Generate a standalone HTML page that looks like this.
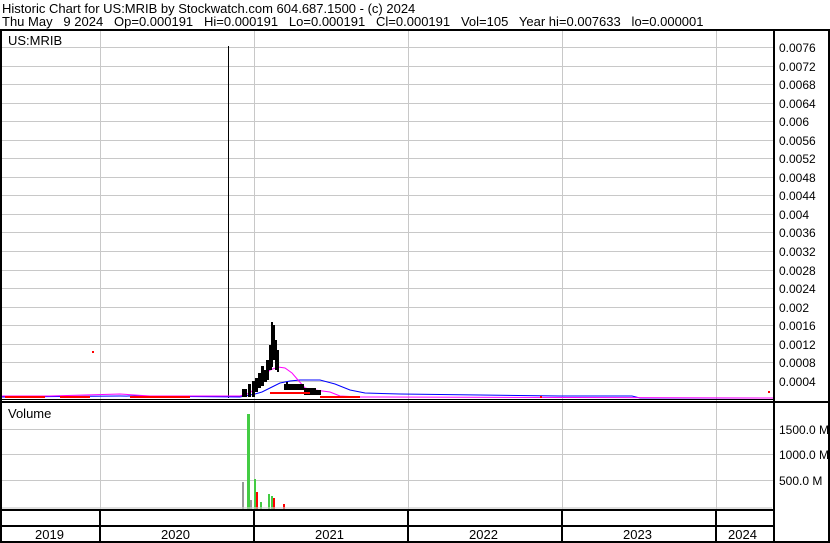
<!DOCTYPE html>
<html><head><style>
html,body{margin:0;padding:0;background:#fff;}
svg{display:block;font-family:"Liberation Sans",Arial,sans-serif;}
</style></head><body>
<svg width="830" height="543" viewBox="0 0 830 543" xmlns="http://www.w3.org/2000/svg">
<rect x="0" y="0" width="830" height="543" fill="#fff"/>
<text x="2" y="13" font-size="13" fill="#000">Historic Chart for US:MRIB by Stockwatch.com 604.687.1500 - (c) 2024</text>
<text x="2" y="26" font-size="13" fill="#000" xml:space="preserve">Thu May   9 2024   Op=0.000191   Hi=0.000191   Lo=0.000191   Cl=0.000191   Vol=105   Year hi=0.007633   lo=0.000001</text>
<g stroke="#c8c8c8" stroke-width="1">
<line x1="2" y1="47.5" x2="773" y2="47.5"/><line x1="2" y1="66.5" x2="773" y2="66.5"/><line x1="2" y1="84.5" x2="773" y2="84.5"/><line x1="2" y1="103.5" x2="773" y2="103.5"/><line x1="2" y1="121.5" x2="773" y2="121.5"/><line x1="2" y1="140.5" x2="773" y2="140.5"/><line x1="2" y1="158.5" x2="773" y2="158.5"/><line x1="2" y1="177.5" x2="773" y2="177.5"/><line x1="2" y1="195.5" x2="773" y2="195.5"/><line x1="2" y1="214.5" x2="773" y2="214.5"/><line x1="2" y1="232.5" x2="773" y2="232.5"/><line x1="2" y1="251.5" x2="773" y2="251.5"/><line x1="2" y1="270.5" x2="773" y2="270.5"/><line x1="2" y1="288.5" x2="773" y2="288.5"/><line x1="2" y1="307.5" x2="773" y2="307.5"/><line x1="2" y1="325.5" x2="773" y2="325.5"/><line x1="2" y1="344.5" x2="773" y2="344.5"/><line x1="2" y1="362.5" x2="773" y2="362.5"/><line x1="2" y1="381.5" x2="773" y2="381.5"/>
<line x1="2" y1="429.5" x2="773" y2="429.5"/><line x1="2" y1="454.5" x2="773" y2="454.5"/><line x1="2" y1="480.5" x2="773" y2="480.5"/>
<line x1="100.5" y1="31" x2="100.5" y2="509"/><line x1="254.5" y1="31" x2="254.5" y2="509"/><line x1="408.5" y1="31" x2="408.5" y2="509"/><line x1="562.5" y1="31" x2="562.5" y2="509"/><line x1="716.5" y1="31" x2="716.5" y2="509"/>
</g>
<text x="8" y="45" font-size="13">US:MRIB</text>
<text x="8" y="418" font-size="13">Volume</text>
<!-- spike -->
<line x1="228.5" y1="46" x2="228.5" y2="398" stroke="#000"/>
<!-- MA lines -->
<polyline fill="none" stroke="#00f" points="2,397 120,396 240,397 255,394 262,392 272,387 280,383 290,381 300,380 320,380 335,384 350,390 365,393 400,394 480,395 560,396 632,396 640,398 773,398"/>
<polyline fill="none" stroke="#f0f" points="2,396 50,396 120,394 150,396 240,396 250,393 258,385 262,378 270,370 278,367 285,368 292,373 298,380 305,388 315,390 330,392 340,396 360,397 773,398"/>
<!-- candles -->
<g fill="#000">
<rect x="242" y="389" width="5" height="8"/><rect x="248" y="384" width="3" height="13"/><rect x="252" y="381" width="3" height="16"/><rect x="255" y="378" width="3" height="14"/><rect x="258" y="373" width="3" height="15"/><rect x="261" y="366" width="3" height="20"/><rect x="264" y="370" width="3" height="12"/><rect x="266" y="360" width="3" height="20"/><rect x="269" y="345" width="3" height="25"/><rect x="271" y="322" width="2" height="45"/><rect x="273" y="325" width="2" height="35"/><rect x="275" y="340" width="2" height="30"/><rect x="277" y="350" width="2" height="22"/><rect x="284" y="384" width="20" height="6"/><rect x="286" y="382" width="2" height="8"/><rect x="304" y="388" width="12" height="7"/><rect x="316" y="390" width="5" height="5"/>
</g>
<g fill="#f00">
<rect x="5" y="396" width="40" height="2"/><rect x="60" y="396" width="30" height="2"/><rect x="130" y="396" width="60" height="2"/><rect x="270" y="392" width="40" height="2"/><rect x="320" y="396" width="40" height="2"/><rect x="92" y="351" width="2" height="2"/><rect x="768" y="391" width="2" height="2"/><rect x="540" y="396" width="2" height="2"/>
</g>
<!-- volume bars -->
<g>
<rect x="242" y="482" width="2" height="27" fill="#999"/>
<rect x="247" y="414" width="3" height="95" fill="#4c4"/>
<rect x="250" y="500" width="2" height="9" fill="#999"/>
<rect x="254" y="479" width="2" height="30" fill="#4c4"/>
<rect x="256" y="492" width="2" height="17" fill="#f00"/>
<rect x="260" y="502" width="2" height="7" fill="#4c4"/>
<rect x="268" y="494" width="2" height="15" fill="#4c4"/>
<rect x="271" y="496" width="2" height="13" fill="#4c4"/>
<rect x="273" y="498" width="2" height="11" fill="#f00"/>
<rect x="283" y="504" width="2" height="5" fill="#f00"/>
<rect x="2" y="507" width="770" height="2" fill="#ccc" opacity="0.6"/>
</g>
<!-- frame lines -->
<g fill="#000">
<rect x="0" y="29" width="830" height="2"/>
<rect x="0" y="29" width="2" height="514"/>
<rect x="828" y="29" width="2" height="514"/>
<rect x="0" y="541" width="830" height="2"/>
<rect x="773" y="29" width="2" height="512"/>
<rect x="2" y="399" width="771" height="1"/>
<rect x="2" y="401" width="828" height="2"/>
<rect x="2" y="509" width="771" height="2"/>
<rect x="2" y="525" width="771" height="2"/>
<rect x="99" y="511" width="2" height="30"/><rect x="253" y="511" width="2" height="30"/><rect x="407" y="511" width="2" height="30"/><rect x="561" y="511" width="2" height="30"/><rect x="715" y="511" width="2" height="30"/>
</g>
<g font-size="13" fill="#000">
<text x="35" y="539">2019</text><text x="161" y="539">2020</text><text x="315" y="539">2021</text><text x="469" y="539">2022</text><text x="623" y="539">2023</text><text x="728" y="539">2024</text>
</g>
<g font-size="12" fill="#000">
<text x="779" y="52">0.0076</text><text x="779" y="71">0.0072</text><text x="779" y="89">0.0068</text><text x="779" y="108">0.0064</text><text x="779" y="126">0.006</text><text x="779" y="145">0.0056</text><text x="779" y="163">0.0052</text><text x="779" y="182">0.0048</text><text x="779" y="200">0.0044</text><text x="779" y="219">0.004</text><text x="779" y="237">0.0036</text><text x="779" y="256">0.0032</text><text x="779" y="275">0.0028</text><text x="779" y="293">0.0024</text><text x="779" y="312">0.002</text><text x="779" y="330">0.0016</text><text x="779" y="349">0.0012</text><text x="779" y="367">0.0008</text><text x="779" y="386">0.0004</text>
<text x="779" y="434">1500.0 M</text><text x="779" y="459">1000.0 M</text><text x="779" y="485">500.0 M</text>
</g>
</svg>
</body></html>
